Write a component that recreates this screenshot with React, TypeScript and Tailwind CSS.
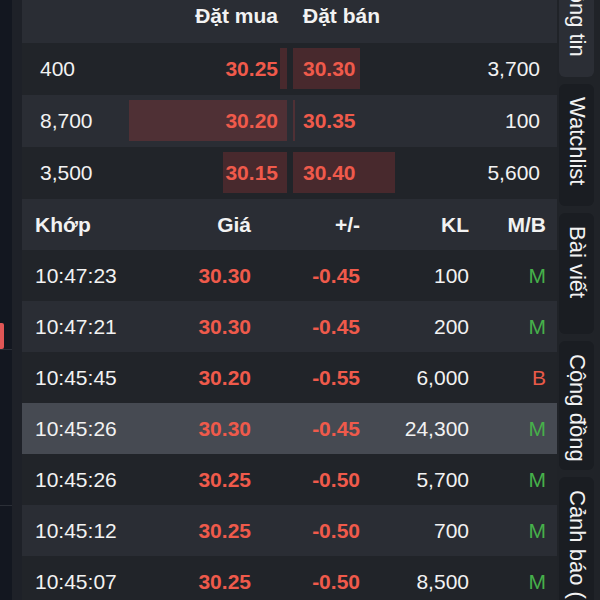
import React from "react";

const RED = "text-[#ef5a4b]";

const bids = [
  { vol: 400, price: "30.25" },
  { vol: 8700, price: "30.20" },
  { vol: 3500, price: "30.15" },
];
const asks = [
  { vol: 3700, price: "30.30" },
  { vol: 100, price: "30.35" },
  { vol: 5600, price: "30.40" },
];

const trades = [
  { t: "10:47:23", p: "30.30", c: "-0.45", kl: "100", side: "M" },
  { t: "10:47:21", p: "30.30", c: "-0.45", kl: "200", side: "M" },
  { t: "10:45:45", p: "30.20", c: "-0.55", kl: "6,000", side: "B" },
  { t: "10:45:26", p: "30.30", c: "-0.45", kl: "24,300", side: "M" },
  { t: "10:45:26", p: "30.25", c: "-0.50", kl: "5,700", side: "M" },
  { t: "10:45:12", p: "30.25", c: "-0.50", kl: "700", side: "M" },
  { t: "10:45:07", p: "30.25", c: "-0.50", kl: "8,500", side: "M" },
];

const tabs = [
  { label: "Thông tin", h: "h-[125px]", active: true },
  { label: "Watchlist", h: "h-[122px]", active: false },
  { label: "Bài viết", h: "h-[121px]", active: false },
  { label: "Cộng đồng", h: "h-[129px]", active: false },
  { label: "Cảnh báo (1)", h: "h-[160px]", active: false },
];

const MAX_VOL = 8700;
const BAR_MAX = 158;
const fmt = (n: number) => n.toLocaleString("en-US");

export default function App() {
  return (
    <div className="flex h-[600px] w-[600px] overflow-hidden bg-[#202328] font-['Liberation_Sans',Arial,sans-serif] text-[21px] text-[#f2f2f2]">
      {/* left rail */}
      <div className="flex w-[12px] shrink-0 flex-col bg-[#131720]">
        <div className="h-[323px] shrink-0" />
        <div className="h-[26px] w-[4px] shrink-0 rounded-r-[2px] bg-[#e05656]" />
        <div className="h-px shrink-0 bg-[#2b2f37]" />
        <div className="h-[155px] shrink-0" />
        <div className="h-px shrink-0 bg-[#2b2f37]" />
      </div>
      <div className="w-[10px] shrink-0 bg-[#1e2128]" />

      {/* main */}
      <div className="flex w-[535px] shrink-0 flex-col">
        {/* order book header */}
        <div className="flex h-[43px] shrink-0 bg-[#2a2d34] pt-[5px] font-bold leading-[22px]">
          <div className="w-[265px] pr-[9px] text-right">Đặt mua</div>
          <div className="w-[6px]" />
          <div className="flex-1 pl-[10px]">Đặt bán</div>
        </div>

        {bids.map((b, i) => {
          const a = asks[i];
          return (
            <div key={i} className={`flex h-[52px] shrink-0 ${i % 2 ? "bg-[#2a2d34]" : "bg-[#212429]"}`}>
              <div className="relative flex w-[265px] items-center justify-between pl-[18px] pr-[9px]">
                <div className="absolute right-0 top-[5px] bottom-[6px] bg-[rgba(214,60,60,0.22)]" style={{ width: (b.vol / MAX_VOL) * BAR_MAX }} />
                <span className="relative">{fmt(b.vol)}</span>
                <span className={`relative font-bold ${RED}`}>{b.price}</span>
              </div>
              <div className="w-[6px]" />
              <div className="relative flex flex-1 items-center justify-between pl-[10px] pr-[17px]">
                <div className="absolute left-0 top-[5px] bottom-[6px] bg-[rgba(214,60,60,0.22)]" style={{ width: (a.vol / MAX_VOL) * BAR_MAX }} />
                <span className={`relative font-bold ${RED}`}>{a.price}</span>
                <span className="relative">{fmt(a.vol)}</span>
              </div>
            </div>
          );
        })}

        {/* matched trades */}
        <div className="flex h-[51px] shrink-0 items-center bg-[#2a2d34] pl-[13px] font-bold">
          <div className="w-[110px]">Khớp</div>
          <div className="w-[106px] text-right">Giá</div>
          <div className="w-[109px] text-right">+/-</div>
          <div className="w-[109px] text-right">KL</div>
          <div className="w-[77px] text-right">M/B</div>
        </div>

        {trades.map((r, i) => (
          <div
            key={i}
            className={`flex h-[51px] shrink-0 items-center pl-[13px] ${i === 3 ? "bg-[#464a52]" : i % 2 ? "bg-[#2a2d34]" : "bg-[#212429]"}`}
          >
            <div className="w-[110px]">{r.t}</div>
            <div className={`w-[106px] text-right font-bold ${RED}`}>{r.p}</div>
            <div className={`w-[109px] text-right font-bold ${RED}`}>{r.c}</div>
            <div className="w-[109px] text-right">{r.kl}</div>
            <div className={`w-[77px] text-right ${r.side === "M" ? "text-[#46b04a]" : "text-[#e85a48]"}`}>{r.side}</div>
          </div>
        ))}
      </div>

      {/* side tabs */}
      <div className="flex w-[43px] shrink-0 flex-col gap-[7px] pl-[2px]">
        {tabs.map((t, i) => (
          <div
            key={t.label}
            className={`flex w-[35px] shrink-0 justify-center rounded-[6px] pt-[13px] ${t.h} ${i === 0 ? "mt-[-48px]" : ""} ${t.active ? "bg-[#2b2e35]" : "bg-[#1a1d22]"}`}
          >
            <span className="whitespace-nowrap text-[22px] leading-[26px] [writing-mode:vertical-rl]">{t.label}</span>
          </div>
        ))}
      </div>
    </div>
  );
}
